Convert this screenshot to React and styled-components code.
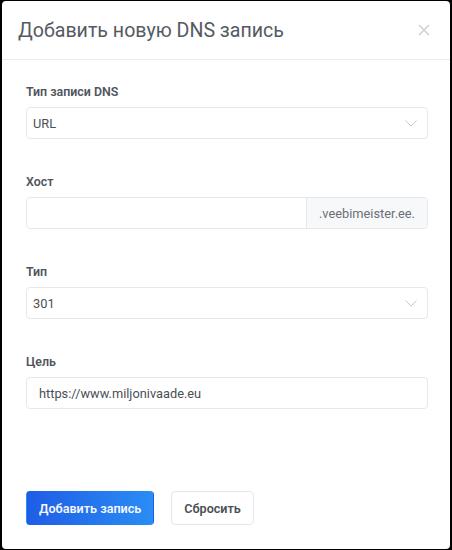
import React from 'react';
import styled, { createGlobalStyle } from 'styled-components';

const GlobalStyle = createGlobalStyle`
  html, body {
    margin: 0;
    padding: 0;
    background: #000;
    font-family: Roboto, "Noto Sans", "Liberation Sans", sans-serif;
  }
`

const Modal = styled.div`
  box-sizing: border-box;
  width: 448px;
  height: 548px;
  margin: 1px 2px;
  background: #fff;
  border-radius: 4px;
  display: flex;
  flex-direction: column;
`

const Header = styled.div`
  display: flex;
  align-items: center;
  justify-content: space-between;
  height: 58px;
  padding: 0 18px 0 16px;
  border-bottom: 1px solid #e9ebef;
`

const Title = styled.h2`
  margin: 0;
  font-size: 19.6px;
  font-weight: 400;
  color: #555a61;
`

const Close = styled.button`
  border: 0;
  background: none;
  padding: 0;
  width: 16px;
  height: 16px;
  display: flex;
  align-items: center;
  justify-content: center;
  cursor: pointer;
`

const Body = styled.form`
  flex: 1;
  display: flex;
  flex-direction: column;
  padding: 23px 22px 24px 24px;
`

const Field = styled.div`
  display: flex;
  flex-direction: column;
  margin-bottom: 34px;
`

const Label = styled.label`
  font-size: 12.4px;
  line-height: 18px;
  font-weight: 600;
  color: #50555c;
  margin-bottom: 6px;
`

const Box = styled.div`
  box-sizing: border-box;
  height: 32px;
  display: flex;
  align-items: center;
  border: 1px solid #e6e8ee;
  border-radius: 4px;
  background: #fff;
  overflow: hidden;
`

const SelectBox = styled(Box)`
  justify-content: space-between;
  padding: 0 10px 0 6px;
  font-size: 12.8px;
  color: #4a4f55;
`

const Text = styled.span`
  padding-left: ${props => props.inset || '0px'};
  font-size: 12.8px;
  color: #4a4f55;
`

const Input = styled.div`
  flex: 1;
  height: 100%;
  display: flex;
  align-items: center;
`

const Addon = styled.div`
  box-sizing: border-box;
  height: 100%;
  width: 121px;
  display: flex;
  align-items: center;
  padding-left: 12px;
  background: #f7f8fa;
  border-left: 1px solid #e6e8ee;
  font-size: 12.8px;
  color: #6a6f76;
`

const Actions = styled.div`
  margin-top: auto;
  display: flex;
  gap: 17px;
`

const Button = styled.button`
  box-sizing: border-box;
  height: 34px;
  padding: 0 12px;
  border-radius: 4px;
  font-family: inherit;
  font-size: 12.6px;
  font-weight: 600;
  cursor: pointer;
  border: 1px solid ${props => props.primary ? 'transparent' : '#e3e6ee'};
  background: ${props => props.primary ? 'linear-gradient(90deg, #1f5de6 0%, #2a8df4 100%)' : '#fff'};
  color: ${props => props.primary ? '#f4f7ff' : '#4a4f55'};
`

const Chevron = () => (
  <svg width="12" height="7" viewBox="0 0 12 7" fill="none">
    <path d="M0.5 0.5 L6 6 L11.5 0.5" stroke="#c4c8ce" strokeWidth="1" />
  </svg>
)

const CloseIcon = () => (
  <svg width="12" height="12" viewBox="0 0 12 12" fill="none">
    <path d="M1 1 L11 11 M11 1 L1 11" stroke="#c8cbd0" strokeWidth="1.3" />
  </svg>
)

const App = () => (
  <>
    <GlobalStyle />
    <Modal>
      <Header>
        <Title>Добавить новую DNS запись</Title>
        <Close type="button"><CloseIcon /></Close>
      </Header>
      <Body onSubmit={e => e.preventDefault()}>
        <Field>
          <Label>Тип записи DNS</Label>
          <SelectBox>
            <span>URL</span>
            <Chevron />
          </SelectBox>
        </Field>
        <Field>
          <Label>Хост</Label>
          <Box>
            <Input />
            <Addon>.veebimeister.ee.</Addon>
          </Box>
        </Field>
        <Field>
          <Label>Тип</Label>
          <SelectBox>
            <span>301</span>
            <Chevron />
          </SelectBox>
        </Field>
        <Field>
          <Label>Цель</Label>
          <Box>
            <Input><Text inset="12px">https://www.miljonivaade.eu</Text></Input>
          </Box>
        </Field>
        <Actions>
          <Button primary type="submit">Добавить запись</Button>
          <Button type="button">Сбросить</Button>
        </Actions>
      </Body>
    </Modal>
  </>
)

export default App;
